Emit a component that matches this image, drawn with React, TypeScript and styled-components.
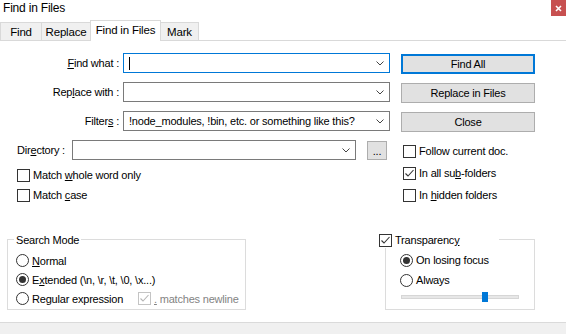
import React from 'react';
import styled, { createGlobalStyle } from 'styled-components';

const GlobalStyle = createGlobalStyle`
  html, body {
    margin: 0;
    padding: 0;
    background: #fff;
  }
  body {
    font-family: "Liberation Sans", Arial, sans-serif;
    font-size: 11px;
    letter-spacing: -0.2px;
    color: #000;
  }
`;

const Window = styled.div`
  width: 566px;
  height: 334px;
  display: flex;
  flex-direction: column;
  background: #fff;
  overflow: hidden;
`;

const TitleBar = styled.div`
  height: 20px;
  display: flex;
  justify-content: space-between;
  align-items: flex-start;
`;

const Title = styled.div`
  padding: 1px 0 0 3px;
  font-size: 12px;
  line-height: 14px;
`;

const CloseButton = styled.div`
  width: 15px;
  height: 16px;
  background: #c75050;
  display: flex;
  align-items: center;
  justify-content: center;
`;

const TabStrip = styled.div`
  height: 20px;
  display: flex;
  align-items: flex-end;
  border-bottom: 1px solid #d9d9d9;
`;

const Tab = styled.div<{ $active?: boolean; $w: number }>`
  box-sizing: border-box;
  width: ${(p) => p.$w}px;
  height: ${(p) => (p.$active ? 21 : 18)}px;
  margin-bottom: ${(p) => (p.$active ? -1 : 0)}px;
  margin-right: -1px;
  border: 1px solid #d9d9d9;
  border-bottom: none;
  background: ${(p) => (p.$active ? '#fff' : '#f0f0f0')};
  z-index: ${(p) => (p.$active ? 1 : 0)};
  text-align: center;
  font-size: 11.5px;
  line-height: ${(p) => (p.$active ? 18 : 18)}px;
`;

const Body = styled.div`
  height: 198px;
  display: flex;
`;

const FormColumn = styled.div`
  width: 390px;
  padding-top: 12px;
  display: flex;
  flex-direction: column;
`;

const FieldRow = styled.div<{ $indent?: number }>`
  display: flex;
  align-items: center;
  height: 20px;
  margin-bottom: 9px;
  padding-left: ${(p) => p.$indent || 0}px;
`;

const FieldLabel = styled.label<{ $w: number; $align?: string }>`
  width: ${(p) => p.$w}px;
  margin-right: ${(p) => (p.$align === 'left' ? 0 : 4)}px;
  text-align: ${(p) => p.$align || 'right'};
  white-space: nowrap;
`;

const Key = styled.span`
  text-decoration: underline;
`;

const ComboBox = styled.div<{ $focused?: boolean; $w: number }>`
  box-sizing: border-box;
  width: ${(p) => p.$w}px;
  height: 20px;
  border: 1px solid ${(p) => (p.$focused ? '#0078d7' : '#7a7a7a')};
  background: #fff;
  display: flex;
  align-items: center;
  padding: 0 5px 0 5px;
`;

const ComboText = styled.span`
  flex: 1;
  white-space: nowrap;
  overflow: hidden;
`;

const Caret = styled.span`
  display: block;
  width: 1px;
  height: 13px;
  background: #000;
`;

const Spacer = styled.span`
  flex: 1;
`;

const BrowseButton = styled.div`
  box-sizing: border-box;
  width: 20px;
  height: 19px;
  margin-left: 11px;
  border: 1px solid #adadad;
  background: #e1e1e1;
  text-align: center;
  line-height: 19px;
`;

const CheckList = styled.div<{ $row: number; $indent: number; $top?: number }>`
  display: flex;
  flex-direction: column;
  padding-left: ${(p) => p.$indent}px;
  margin-top: ${(p) => p.$top || 0}px;

  & > * {
    height: ${(p) => p.$row}px;
  }
`;

const CheckRow = styled.label`
  display: flex;
  align-items: center;
`;

const Box = styled.span<{ $disabled?: boolean }>`
  box-sizing: border-box;
  width: 13px;
  height: 13px;
  border: 1px solid ${(p) => (p.$disabled ? '#c4c4c4' : '#333')};
  background: #fff;
  display: inline-flex;
  align-items: center;
  justify-content: center;
  flex-shrink: 0;
`;

const OptionText = styled.span<{ $disabled?: boolean }>`
  margin-left: 3px;
  white-space: nowrap;
  color: ${(p) => (p.$disabled ? '#838383' : '#000')};
`;

const ButtonColumn = styled.div`
  width: 134px;
  margin-left: 11px;
  padding-top: 13px;
  display: flex;
  flex-direction: column;
`;

const ButtonStack = styled.div`
  display: flex;
  flex-direction: column;
  gap: 9px;
`;

const PushButton = styled.div<{ $default?: boolean }>`
  box-sizing: border-box;
  height: 20px;
  border: ${(p) => (p.$default ? '2px solid #0078d7' : '1px solid #adadad')};
  background: #e1e1e1;
  display: flex;
  align-items: center;
  justify-content: center;
`;

const GroupsRow = styled.div`
  height: 71px;
  display: flex;
  justify-content: space-between;
  padding: 0 31px 0 7px;
`;

const Group = styled.div<{ $w: number; $pad: number; $top: number }>`
  position: relative;
  box-sizing: border-box;
  width: ${(p) => p.$w}px;
  height: 71px;
  border: 1px solid #dcdcdc;
  padding: ${(p) => p.$top}px 0 0 ${(p) => p.$pad}px;
`;

const Legend = styled.div<{ $left: number }>`
  position: absolute;
  top: -8px;
  left: ${(p) => p.$left}px;
  height: 16px;
  padding: 0 2px;
  background: #fff;
  display: flex;
  align-items: center;
`;

const RadioRow = styled.label<{ $h: number }>`
  display: flex;
  align-items: center;
  height: ${(p) => p.$h}px;
`;

const RadioItem = styled.span<{ $w?: number }>`
  display: flex;
  align-items: center;
  width: ${(p) => (p.$w ? `${p.$w}px` : 'auto')};
`;

const RadioCircle = styled.span<{ $on?: boolean }>`
  box-sizing: border-box;
  width: 13px;
  height: 13px;
  border-radius: 50%;
  border: 1px solid #333;
  display: inline-flex;
  align-items: center;
  justify-content: center;
  flex-shrink: 0;

  &::after {
    content: '';
    display: ${(p) => (p.$on ? 'block' : 'none')};
    width: 7px;
    height: 7px;
    border-radius: 50%;
    background: #333;
  }
`;

const SliderTrack = styled.div`
  position: relative;
  box-sizing: border-box;
  width: 118px;
  height: 4px;
  margin: 5px 0 0 1px;
  border: 1px solid #d6d6d6;
  background: #e7e7e7;
`;

const SliderThumb = styled.span`
  position: absolute;
  top: -4px;
  width: 6px;
  height: 10px;
  background: #0078d7;
`;

const StatusStrip = styled.div`
  margin-top: auto;
  height: 11px;
  border-top: 1px solid #dadada;
  background: #f0f0f0;
`;

const Chevron: React.FC = () => (
  <svg width="8" height="5" viewBox="0 0 8 5">
    <polyline points="0.5,0.5 4,4 7.5,0.5" fill="none" stroke="#444" strokeWidth="1" />
  </svg>
);

const Tick: React.FC<{ color?: string }> = ({ color = '#333' }) => (
  <svg width="11" height="11" viewBox="0 0 11 11">
    <polyline points="1.5,5.5 4,8 9.5,2" fill="none" stroke={color} strokeWidth="1.1" />
  </svg>
);

const Check: React.FC<{ checked?: boolean; disabled?: boolean; children: React.ReactNode }> = ({
  checked,
  disabled,
  children,
}) => (
  <CheckRow>
    <Box $disabled={disabled}>{checked && <Tick color={disabled ? '#b5b5b5' : '#333'} />}</Box>
    <OptionText $disabled={disabled}>{children}</OptionText>
  </CheckRow>
);

const tabs = [
  { label: 'Find', w: 42 },
  { label: 'Replace', w: 50 },
  { label: 'Find in Files', w: 71, active: true },
  { label: 'Mark', w: 39 },
];

const transparency = 80;

export default function App() {
  const thumbLeft = Math.round((transparency / 100) * (116 - 6)) - 8;

  return (
    <Window>
      <GlobalStyle />
      <TitleBar>
        <Title>Find in Files</Title>
        <CloseButton>
          <svg width="7" height="7" viewBox="0 0 7 7">
            <path d="M1 1 L6 6 M6 1 L1 6" stroke="#fff" strokeWidth="1.6" />
          </svg>
        </CloseButton>
      </TitleBar>

      <TabStrip>
        {tabs.map((t) => (
          <Tab key={t.label} $w={t.w} $active={t.active}>
            {t.label}
          </Tab>
        ))}
      </TabStrip>

      <Body>
        <FormColumn>
          <FieldRow>
            <FieldLabel $w={119}>
              <Key>F</Key>ind what :
            </FieldLabel>
            <ComboBox $w={267} $focused>
              <Caret />
              <Spacer />
              <Chevron />
            </ComboBox>
          </FieldRow>
          <FieldRow>
            <FieldLabel $w={119}>
              Rep<Key>l</Key>ace with :
            </FieldLabel>
            <ComboBox $w={267}>
              <Spacer />
              <Chevron />
            </ComboBox>
          </FieldRow>
          <FieldRow>
            <FieldLabel $w={119}>
              Filter<Key>s</Key> :
            </FieldLabel>
            <ComboBox $w={267}>
              <ComboText>!node_modules, !bin, etc. or something like this?</ComboText>
              <Chevron />
            </ComboBox>
          </FieldRow>
          <FieldRow $indent={17} style={{ marginBottom: 5 }}>
            <FieldLabel $w={55} $align="left">
              Dir<Key>e</Key>ctory :
            </FieldLabel>
            <ComboBox $w={284}>
              <Spacer />
              <Chevron />
            </ComboBox>
            <BrowseButton>...</BrowseButton>
          </FieldRow>
          <CheckList $row={20} $indent={17}>
            <Check>
              Match <Key>w</Key>hole word only
            </Check>
            <Check>
              Match <Key>c</Key>ase
            </Check>
          </CheckList>
        </FormColumn>

        <ButtonColumn>
          <ButtonStack>
            <PushButton $default>Find All</PushButton>
            <PushButton>Replace in Files</PushButton>
            <PushButton>Close</PushButton>
          </ButtonStack>
          <CheckList $row={22} $indent={2} $top={8}>
            <Check>Follow current doc.</Check>
            <Check checked>
              In all su<Key>b</Key>-folders
            </Check>
            <Check>
              In <Key>h</Key>idden folders
            </Check>
          </CheckList>
        </ButtonColumn>
      </Body>

      <GroupsRow>
        <Group $w={239} $pad={8} $top={11}>
          <Legend $left={6}>Search Mode</Legend>
          <RadioRow $h={19}>
            <RadioCircle />
            <OptionText>
              <Key>N</Key>ormal
            </OptionText>
          </RadioRow>
          <RadioRow $h={19}>
            <RadioCircle $on />
            <OptionText>
              E<Key>x</Key>tended (\n, \r, \t, \0, \x...)
            </OptionText>
          </RadioRow>
          <RadioRow $h={19}>
            <RadioItem $w={122}>
              <RadioCircle />
              <OptionText>
                Re<Key>g</Key>ular expression
              </OptionText>
            </RadioItem>
            <Check checked disabled>
              <Key>.</Key> matches newline
            </Check>
          </RadioRow>
        </Group>

        <Group $w={150} $pad={14} $top={10}>
          <Legend $left={-9}>
            <Check checked>
              Transparenc<Key>y</Key>
            </Check>
            <span style={{ width: 38 }} />
          </Legend>
          <RadioRow $h={20}>
            <RadioCircle $on />
            <OptionText>On losing focus</OptionText>
          </RadioRow>
          <RadioRow $h={20}>
            <RadioCircle />
            <OptionText>Always</OptionText>
          </RadioRow>
          <SliderTrack>
            <SliderThumb style={{ left: thumbLeft }} />
          </SliderTrack>
        </Group>
      </GroupsRow>

      <StatusStrip />
    </Window>
  );
}
